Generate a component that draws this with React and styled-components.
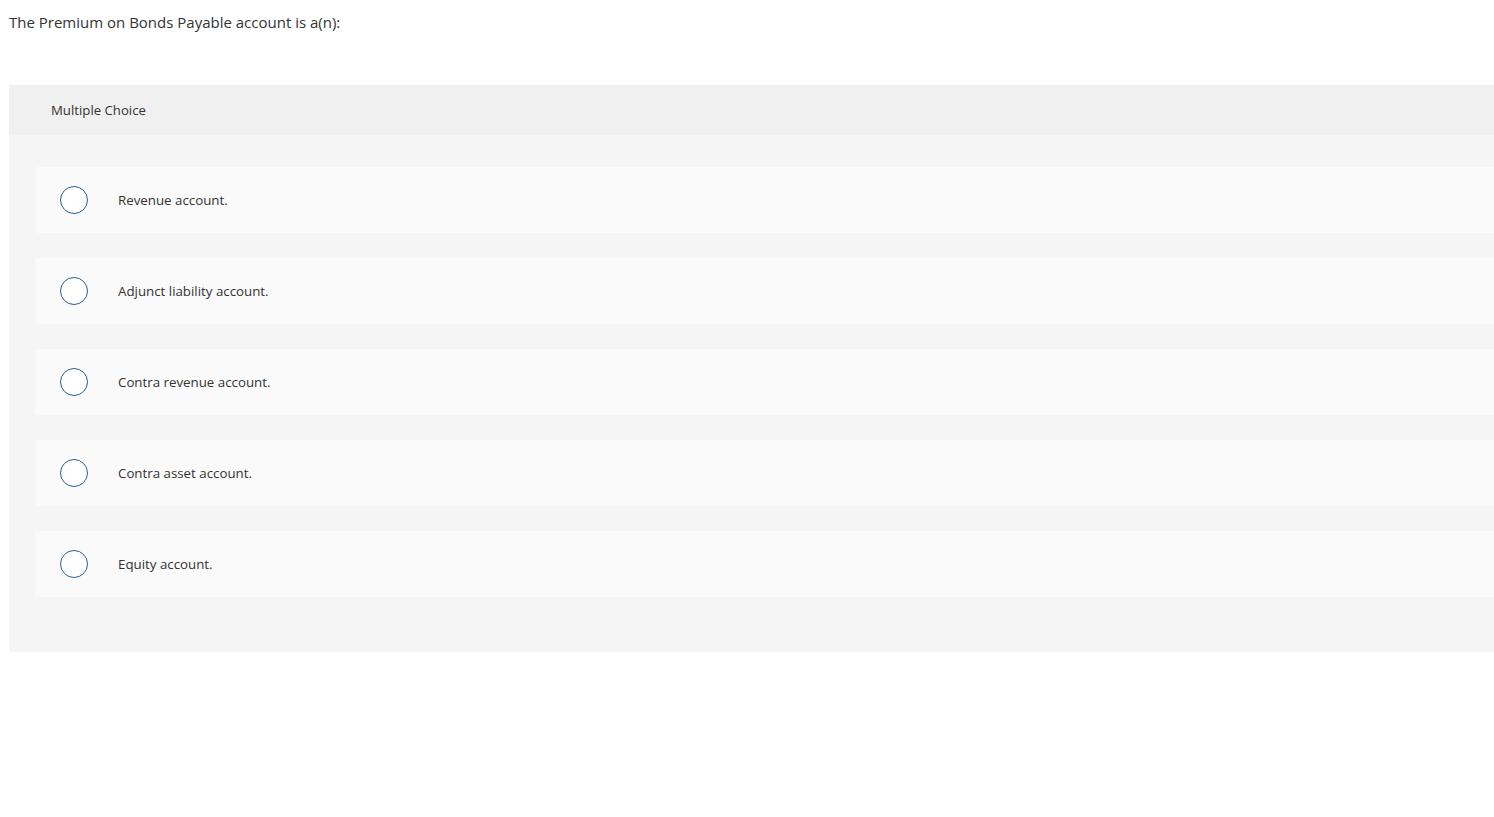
import React from 'react';
import styled, { createGlobalStyle } from 'styled-components';

const GlobalStyle = createGlobalStyle`
    html, body {
        margin: 0;
        padding: 0;
        background: #ffffff;
    }
    body {
        font-family: 'Open Sans', 'Liberation Sans', sans-serif;
        color: #333333;
    }
`;

const choices = [
    'Revenue account.',
    'Adjunct liability account.',
    'Contra revenue account.',
    'Contra asset account.',
    'Equity account.',
];

function App() {
    return (
        <>
            <GlobalStyle />
            <Page>
                <Question>The Premium on Bonds Payable account is a(n):</Question>
                <Panel>
                    <PanelHeader>Multiple Choice</PanelHeader>
                    <ChoiceList>
                        {choices.map((label) => (
                            <ChoiceRow key={label}>
                                <Radio />
                                <ChoiceLabel>{label}</ChoiceLabel>
                            </ChoiceRow>
                        ))}
                    </ChoiceList>
                </Panel>
            </Page>
        </>
    );
}

const Page = styled.div`
    padding: 12px 0 0 9px;
`;

const Question = styled.p`
    margin: 0 0 53px;
    font-size: 15px;
    line-height: 20px;
    color: #333333;
`;

const Panel = styled.section`
    background: #f5f5f5;
    border-bottom-left-radius: 3px;
    padding-bottom: 55px;
`;

const PanelHeader = styled.div`
    height: 50px;
    display: flex;
    align-items: center;
    padding-left: 42px;
    background: #f0f0f0;
    font-size: 13.2px;
    color: #333333;
`;

const ChoiceList = styled.div`
    display: flex;
    flex-direction: column;
    gap: 25px;
    padding: 32px 0 0 26px;
`;

const ChoiceRow = styled.label`
    height: 66px;
    display: flex;
    align-items: center;
    background: #fafafa;
    border-radius: 2px 0 0 2px;
    padding-left: 25px;
    cursor: pointer;
`;

const Radio = styled.span`
    box-sizing: border-box;
    width: 28px;
    height: 28px;
    border: 1.5px solid #2e5f8e;
    border-radius: 50%;
    background: #ffffff;
    flex-shrink: 0;
`;

const ChoiceLabel = styled.span`
    margin-left: 30px;
    font-size: 13.3px;
    color: #333333;
`;

export default App;
